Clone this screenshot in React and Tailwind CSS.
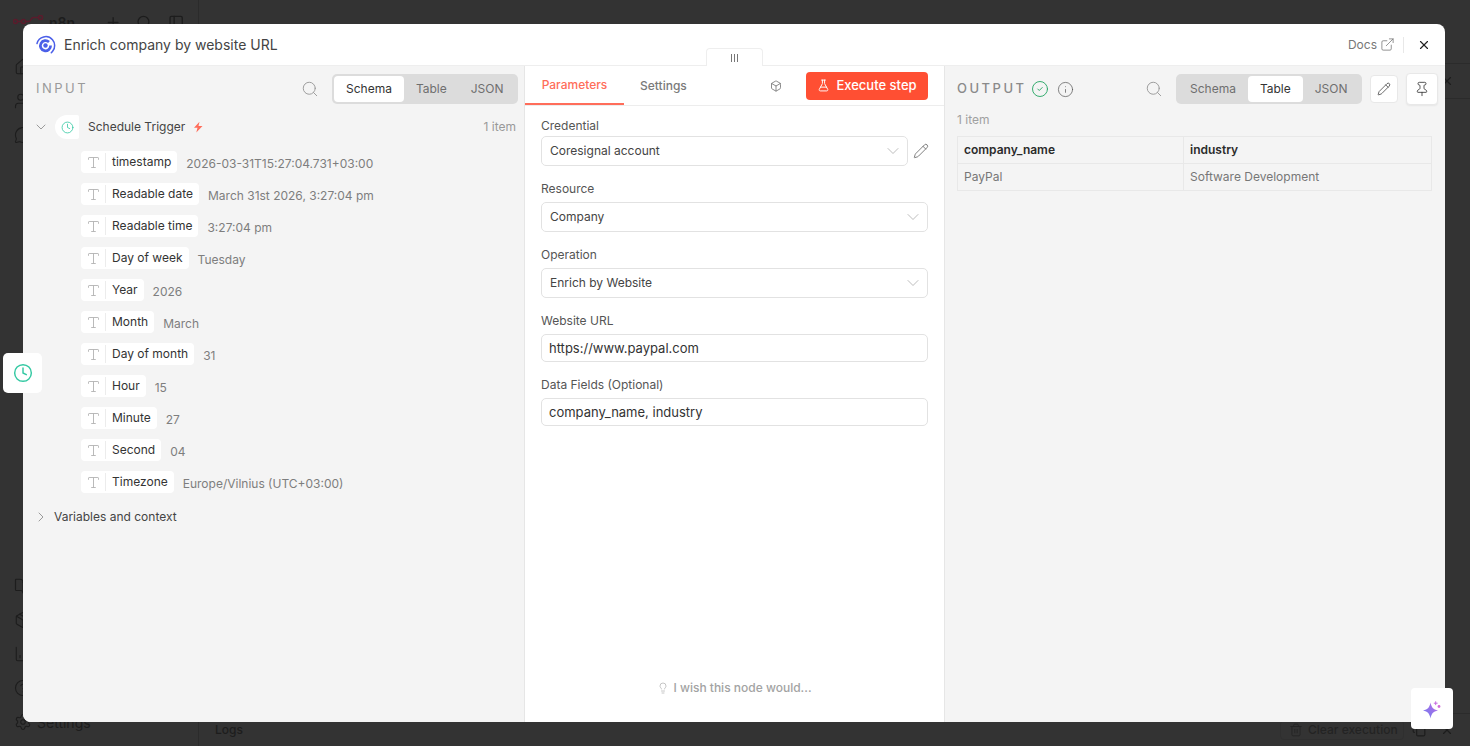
import React from "react";
import {
  BookOpen,
  Box,
  ChartColumn,
  ChevronDown,
  ChevronRight,
  CircleCheck,
  CircleHelp,
  Clock,
  Copy,
  ExternalLink,
  FlaskConical,
  Home,
  Info,
  Lightbulb,
  MessageCircle,
  Package,
  PanelLeft,
  Pencil,
  Pin,
  Plus,
  Search,
  Settings,
  Trash2,
  Type,
  Users,
  X,
} from "lucide-react";

const fields = [
  { name: "timestamp", value: "2026-03-31T15:27:04.731+03:00" },
  { name: "Readable date", value: "March 31st 2026, 3:27:04 pm" },
  { name: "Readable time", value: "3:27:04 pm" },
  { name: "Day of week", value: "Tuesday" },
  { name: "Year", value: "2026" },
  { name: "Month", value: "March" },
  { name: "Day of month", value: "31" },
  { name: "Hour", value: "15" },
  { name: "Minute", value: "27" },
  { name: "Second", value: "04" },
  { name: "Timezone", value: "Europe/Vilnius (UTC+03:00)" },
];

const Logo = () => (
  <svg width="20" height="20" viewBox="0 0 20 20" fill="none">
    <circle cx="9.500" cy="10.500" r="2.200" fill="#4b5fe8" />
    <path d="M13 7a5.100 5.100 0 1 0 1.600 3.500" stroke="#4b5fe8" strokeWidth="2.700" />
    <path d="M1 8.500a9 9 0 0 1 15.500-3.800c2.600 3 2.800 7.800.6 10.800-.5.800-1 1.500-1.800 2.300" stroke="#4b5fe8" strokeWidth="1.500" strokeLinecap="round" />
  </svg>
);

const N8nLogo = () => (
  <svg width="32" height="14" viewBox="0 0 32 14" fill="none" stroke="#5a1c2c" strokeWidth="1.600">
    <circle cx="2.500" cy="6.500" r="2" />
    <circle cx="10.500" cy="6.500" r="2" />
    <circle cx="27.500" cy="2.500" r="2" />
    <path d="M4.500 6.500h4M12.500 6.500h3c3 0 2-4 5-4h5" />
  </svg>
);

const Sparkle = () => (
  <svg width="20" height="20" viewBox="0 0 20 20">
    <defs>
      <linearGradient id="spark" x1="0" y1="1" x2="1" y2="0">
        <stop offset="0" stopColor="#6f7bf0" />
        <stop offset="1" stopColor="#b86be4" />
      </linearGradient>
    </defs>
    <path d="M8.500 3.500C9.400 8.200 11 10.600 16 11.500 11 12.400 9.400 14.800 8.500 19.500 7.600 14.800 6 12.400 1 11.500 6 10.600 7.600 8.200 8.500 3.500z" fill="url(#spark)" />
    <path d="M13.700 2.300v3.800M11.800 4.200h3.800" stroke="#c56be0" strokeWidth="1" />
    <circle cx="17" cy="7.500" r="1.400" fill="#d26bd8" />
  </svg>
);

const Tabs = ({ active, items }) => (
  <div className="flex h-[30px] min-w-[186px] items-center rounded-[5px] bg-[#dcdcdc] p-[2px] text-[12px]">
    {items.map((item) => (
      <div
        key={item}
        className={
          item === active
            ? "flex h-[26px] items-center rounded-[4px] bg-white px-[12px] text-[#333333]"
            : "flex h-[26px] items-center px-[12px] text-[#6f6f6f]"
        }
      >
        {item}
      </div>
    ))}
  </div>
);

const Field = ({ name, value }) => (
  <div className="flex h-[32px] items-start">
    <div className="flex h-[22px] items-center rounded-[4px] bg-white pl-[5px] pr-[6px] text-[12px] text-[#333333]">
      <Type size={15} strokeWidth={1.5} className="text-[#b5b5b5]" />
      <div className="ml-[4px] mr-[6px] h-[18px] w-px bg-[#ececec]" />
      {name}
    </div>
    <div className="ml-[9px] pt-[3px] text-[12px] leading-[20px] text-[#7e7e7e]">{value}</div>
  </div>
);

const Label = ({ children, className = "mb-[5px]" }) => (
  <div className={`text-[12px] leading-[16px] text-[#555555] ${className}`}>{children}</div>
);

const SelectBox = ({ children, className = "" }) => (
  <div className={`flex h-[30px] items-center justify-between rounded-[5px] border border-[#e2e2e2] bg-white pl-[8px] pr-[4px] text-[12px] text-[#444444] ${className}`}>
    {children}
    <ChevronDown size={20} strokeWidth={1} className="text-[#b0b0b0]" />
  </div>
);

const TextBox = ({ children }) => (
  <div className="flex h-[28px] items-center rounded-[5px] border border-[#e2e2e2] bg-white pl-[7px] pt-[1px] text-[13px] text-[#333333]">
    {children}
  </div>
);

const NavIcon = ({ icon: Icon }) => (
  <div className="flex h-[34px] items-center">
    <Icon size={18} strokeWidth={1.5} className="text-[#1d1d1d]" />
  </div>
);

const App = () => {
  return (
    <div className="relative h-[746px] w-full overflow-hidden bg-[#333333] font-['Inter',sans-serif]">
      <div className="flex h-full">
        <div className="flex h-full w-[199px] shrink-0 flex-col border-r border-[#2b2b2b] pl-[14px] pr-[14px]">
          <div className="flex h-[44px] items-center text-[14px] font-semibold text-[#1d1d1d]">
            <div className="-ml-[1px]">
              <N8nLogo />
            </div>
            <span className="ml-[4px]">n8n</span>
            <Plus size={17} className="ml-[30px] text-[#1d1d1d]" />
            <Search size={17} className="ml-[15px] text-[#1d1d1d]" />
            <PanelLeft size={17} className="ml-[15px] text-[#1d1d1d]" />
          </div>
          <div className="mt-[6px]">
            <NavIcon icon={Home} />
            <NavIcon icon={Users} />
            <NavIcon icon={MessageCircle} />
          </div>
          <div className="mt-auto mb-[7px]">
            <NavIcon icon={BookOpen} />
            <NavIcon icon={Package} />
            <NavIcon icon={ChartColumn} />
            <NavIcon icon={CircleHelp} />
            <div className="flex h-[34px] items-center text-[14px] text-[#1d1d1d]">
              <Settings size={18} strokeWidth={1.5} />
              <span className="ml-[5px]">Settings</span>
            </div>
          </div>
        </div>
        <div className="flex flex-1 flex-col">
          <div className="h-[64px] border-b border-[#2b2b2b]" />
          <div className="flex h-[35px] items-center justify-end border-b border-[#2b2b2b] pr-[16px]">
            <X size={14} className="text-[#1d1d1d]" />
          </div>
          <div className="mt-auto flex h-[33px] items-center justify-between border-t border-[#2b2b2b] pl-[16px] pr-[16px] text-[12px] font-medium text-[#1d1d1d]">
            <span>Logs</span>
            <div className="flex items-center">
              <div className="flex h-[20px] w-[124px] items-center rounded-[4px] border border-[#2f2f2f] pl-[8px] text-[#232323]">
                <Trash2 size={14} strokeWidth={1.5} />
                <span className="ml-[5px]">Clear execution</span>
              </div>
              <Copy size={14} strokeWidth={2} className="ml-[8px]" />
              <X size={14} className="ml-[14px]" />
            </div>
          </div>
        </div>
      </div>

      <div className="absolute left-[23px] top-[24px] flex h-[698px] w-[1422px] flex-col overflow-hidden rounded-[8px] bg-white">
        <div className="flex h-[42px] shrink-0 items-center justify-between border-b border-[#eeeeee] pl-[13px] pr-[14px]">
          <div className="flex items-center">
            <Logo />
            <span className="ml-[8px] text-[14px] text-[#444444]">Enrich company by website URL</span>
          </div>
          <div className="flex items-center text-[12px] text-[#777777]">
            <span>Docs</span>
            <ExternalLink size={15} strokeWidth={1.25} className="ml-[3px]" />
            <div className="ml-[8px] mr-[13px] h-[16px] w-px bg-[#e8e8e8]" />
            <X size={14} className="text-[#222222]" />
          </div>
        </div>

        <div className="flex min-h-0 flex-1">
          <div className="flex w-[502px] shrink-0 flex-col border-r border-[#e6e6e6] bg-[#f4f4f4] pl-[13px] pr-[6px]">
            <div className="flex h-[46px] shrink-0 items-center justify-between">
              <span className="text-[13px] tracking-[2.500px] text-[#9a9a9a]">INPUT</span>
              <div className="flex items-center">
                <Search size={18} strokeWidth={1.25} className="mr-[13px] text-[#999999]" />
                <Tabs active="Schema" items={["Schema", "Table", "JSON"]} />
              </div>
            </div>
            <div className="flex h-[30px] shrink-0 items-center justify-between">
              <div className="flex items-center">
                <ChevronDown size={16} strokeWidth={1.25} className="-ml-[3px] text-[#888888]" />
                <div className="ml-[6px] flex h-[24px] w-[24px] items-center justify-center rounded-l-[12px] rounded-r-[2px] bg-white">
                  <Clock size={13} strokeWidth={1.5} className="text-[#35c9a3]" />
                </div>
                <span className="ml-[9px] text-[12px] text-[#444444]">Schedule Trigger</span>
                <svg width="12" height="12" viewBox="0 0 12 12" className="ml-[7px]">
                  <path d="M7.500.8 2 6.800h3.500L4.300 11.400 10.500 5H6.500z" fill="#ff6d5a" />
                </svg>
              </div>
              <span className="pr-[2px] text-[12px] text-[#999999]">1 item</span>
            </div>
            <div className="pl-[45px] pt-[9px]">
              {fields.map((field) => (
                <Field key={field.name} name={field.name} value={field.value} />
              ))}
            </div>
            <div className="mt-[3px] flex h-[22px] items-center text-[12px] text-[#444444]">
              <ChevronRight size={16} strokeWidth={1.25} className="-ml-[3px] text-[#888888]" />
              <span className="ml-[5px]">Variables and context</span>
            </div>
          </div>

          <div className="flex w-[420px] shrink-0 flex-col border-r border-[#e6e6e6] bg-white">
            <div className="flex h-[40px] shrink-0 items-center justify-between border-b border-[#ededed] pr-[16px]">
              <div className="flex h-full">
                <div className="flex h-[39px] w-[99px] items-center justify-center border-b-2 border-[#ff6d5a] text-[12px] font-medium text-[#ff6d5a]">
                  Parameters
                </div>
                <div className="ml-[16px] flex h-full items-center text-[12px] font-medium text-[#7a7a7a]">Settings</div>
              </div>
              <div className="flex items-center">
                <Box size={12} strokeWidth={1.5} className="mr-[24px] text-[#666666]" />
                <div className="flex h-[28px] w-[122px] items-center justify-center rounded-[4px] bg-[#ff4f33] text-[13px] font-medium text-white">
                  <FlaskConical size={13} strokeWidth={1.75} className="mr-[6px]" />
                  Execute step
                </div>
              </div>
            </div>
            <div className="flex flex-1 flex-col pl-[16px] pr-[16px] pt-[12px]">
              <Label className="mb-[2px]">Credential</Label>
              <div className="flex items-center">
                <SelectBox className="flex-1">Coresignal account</SelectBox>
                <Pencil size={16} strokeWidth={1.25} className="-mr-[1px] ml-[5px] text-[#666666]" />
              </div>
              <div className="mt-[15px]">
                <Label>Resource</Label>
                <SelectBox>Company</SelectBox>
              </div>
              <div className="mt-[15px]">
                <Label>Operation</Label>
                <SelectBox>Enrich by Website</SelectBox>
              </div>
              <div className="mt-[15px]">
                <Label>Website URL</Label>
                <TextBox>https://www.paypal.com</TextBox>
              </div>
              <div className="mt-[15px]">
                <Label>Data Fields (Optional)</Label>
                <TextBox>company_name, industry</TextBox>
              </div>
              <div className="mt-auto mb-[25px] flex items-center justify-center text-[12px] font-medium text-[#a3a3a3]">
                <Lightbulb size={12} strokeWidth={1.25} className="mr-[4px]" />
                I wish this node would...
              </div>
            </div>
          </div>

          <div className="flex min-w-0 flex-1 flex-col bg-[#f4f4f4] pl-[12px] pr-[7px]">
            <div className="flex h-[46px] shrink-0 items-center justify-between">
              <div className="flex items-center">
                <span className="text-[13px] font-medium tracking-[2.500px] text-[#8a8a8a]">OUTPUT</span>
                <CircleCheck size={18} strokeWidth={1.25} className="ml-[4px] text-[#2aa866]" />
                <Info size={17} strokeWidth={1} className="ml-[8px] text-[#555555]" />
              </div>
              <div className="flex items-center">
                <Search size={18} strokeWidth={1.25} className="mr-[13px] text-[#999999]" />
                <Tabs active="Table" items={["Schema", "Table", "JSON"]} />
                <div className="ml-[8px] flex h-[28px] w-[28px] items-center justify-center rounded-[4px] border border-[#e8e8e8] bg-white">
                  <Pencil size={14} strokeWidth={1.25} className="text-[#333333]" />
                </div>
                <div className="ml-[8px] flex h-[32px] w-[32px] items-center justify-center rounded-[4px] border border-[#e8e8e8] bg-white shadow-[0_1px_2px_rgba(0,0,0,0.06)]">
                  <Pin size={16} strokeWidth={1.25} className="text-[#333333]" />
                </div>
              </div>
            </div>
            <div className="h-[24px] text-[12px] leading-[16px] text-[#a0a0a0]">1 item</div>
            <div className="mr-[6px] border border-[#e8e8e8] text-[12px]">
              <div className="flex h-[27px] items-center border-b border-[#e8e8e8] font-semibold text-[#2b2b2b]">
                <div className="flex h-full w-[226px] items-center border-r border-[#e8e8e8] pl-[6px]">company_name</div>
                <div className="pl-[6px]">industry</div>
              </div>
              <div className="flex h-[26px] items-center text-[#777777]">
                <div className="flex h-full w-[226px] items-center border-r border-[#e8e8e8] pl-[6px]">PayPal</div>
                <div className="pl-[6px]">Software Development</div>
              </div>
            </div>
          </div>
        </div>
      </div>

      <div className="absolute left-[706px] top-[48px] flex h-[18px] w-[57px] items-center justify-center rounded-t-[4px] border border-b-0 border-[#eeeeee] bg-white">
        <div className="flex gap-[2px]">
          <div className="h-[8px] w-px bg-[#777777]" />
          <div className="h-[8px] w-px bg-[#777777]" />
          <div className="h-[8px] w-px bg-[#777777]" />
        </div>
      </div>

      <div className="absolute left-[3px] top-[353px] flex h-[40px] w-[39px] items-center justify-center rounded-[5px] bg-white">
        <Clock size={20} strokeWidth={1.75} className="text-[#35c9a3]" />
      </div>

      <div className="absolute left-[1411px] top-[688px] flex h-[41px] w-[42px] items-center justify-center rounded-[4px] bg-white">
        <Sparkle />
      </div>
    </div>
  );
};

export default App;
